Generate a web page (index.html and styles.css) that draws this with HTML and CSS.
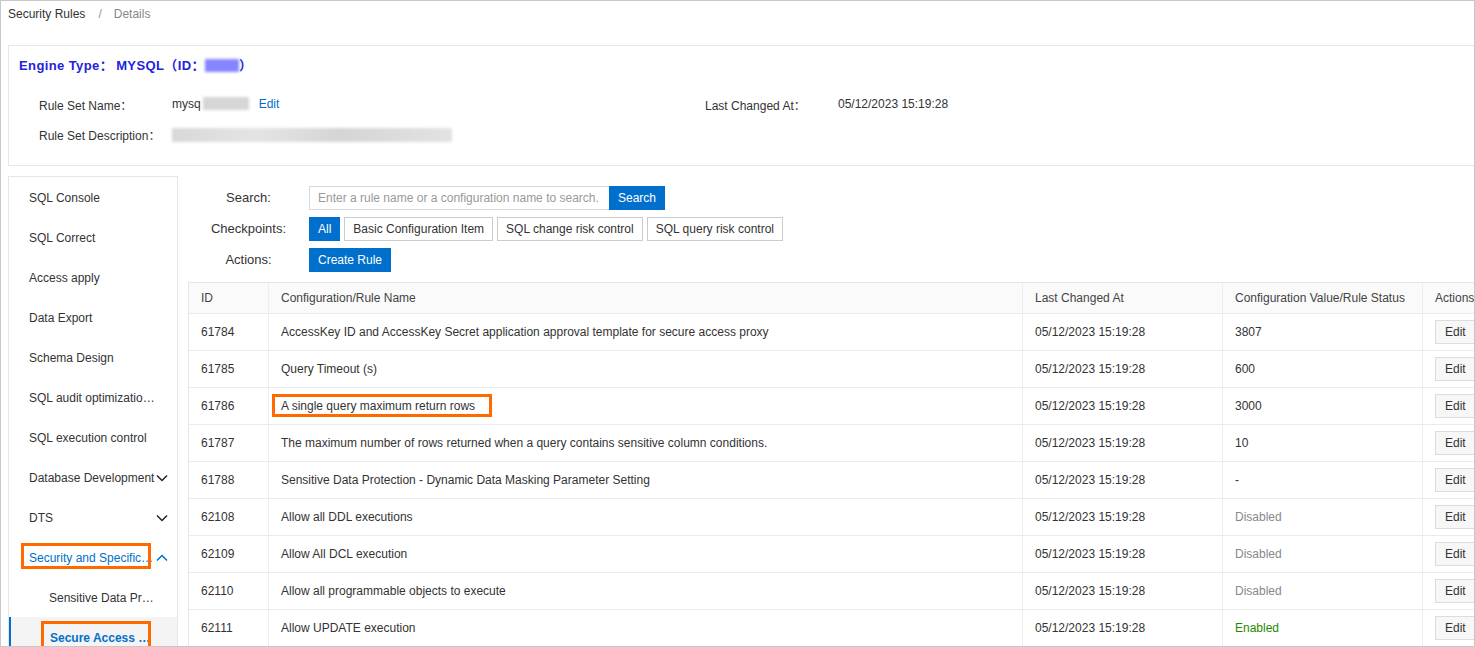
FILE: index.html
```html
<!DOCTYPE html>
<html lang="en">
<head>
<meta charset="utf-8">
<title>Security Rules - Details</title>
<link rel="stylesheet" href="styles.css">
</head>
<body>
<div class="frame">
  <div class="page">
    <div class="crumbs">
      <span class="crumb">Security Rules</span><span class="sep">/</span><span class="crumb current">Details</span>
    </div>

    <section class="card">
      <h1 class="engine">Engine Type：<span class="engine-val">MYSQL</span>（ID：<span class="blur blur-id"></span>）</h1>
      <div class="info">
        <div class="info-row">
          <span class="label">Rule Set Name：</span>
          <span class="value">mysq<span class="blur blur-name"></span><a class="link">Edit</a></span>
          <span class="label">Last Changed At：</span>
          <span class="value">05/12/2023 15:19:28</span>
        </div>
        <div class="info-row">
          <span class="label">Rule Set Description：</span>
          <span class="value"><span class="blur blur-desc"></span></span>
        </div>
      </div>
    </section>

    <div class="layout">
      <nav class="sidebar">
        <div class="nav-item"><span class="nav-text">SQL Console</span></div>
        <div class="nav-item"><span class="nav-text">SQL Correct</span></div>
        <div class="nav-item"><span class="nav-text">Access apply</span></div>
        <div class="nav-item"><span class="nav-text">Data Export</span></div>
        <div class="nav-item"><span class="nav-text">Schema Design</span></div>
        <div class="nav-item"><span class="nav-text">SQL audit optimization advice</span></div>
        <div class="nav-item"><span class="nav-text">SQL execution control</span></div>
        <div class="nav-item"><span class="nav-text">Database Development</span>
          <svg class="chev" viewBox="0 0 12 8" width="12" height="8"><path d="M1 1.5 L6 6.5 L11 1.5"/></svg></div>
        <div class="nav-item"><span class="nav-text">DTS</span>
          <svg class="chev" viewBox="0 0 12 8" width="12" height="8"><path d="M1 1.5 L6 6.5 L11 1.5"/></svg></div>
        <div class="nav-item open"><span class="nav-text">Security and Specifications</span>
          <svg class="chev up" viewBox="0 0 12 8" width="12" height="8"><path d="M1 6.5 L6 1.5 L11 6.5"/></svg>
          <span class="annot annot-open"></span></div>
        <div class="nav-item sub"><span class="nav-text">Sensitive Data Protection</span></div>
        <div class="nav-item sub active"><span class="nav-text">Secure Access Proxy</span>
          <span class="annot annot-active"></span></div>
      </nav>

      <main class="main">
        <div class="filters">
          <div class="frow">
            <span class="flabel">Search:</span>
            <div class="search">
              <input class="search-input" type="text" placeholder="Enter a rule name or a configuration name to search.">
              <button class="btn primary">Search</button>
            </div>
          </div>
          <div class="frow">
            <span class="flabel">Checkpoints:</span>
            <div class="btns">
              <button class="btn primary">All</button>
              <button class="btn">Basic Configuration Item</button>
              <button class="btn">SQL change risk control</button>
              <button class="btn">SQL query risk control</button>
            </div>
          </div>
          <div class="frow">
            <span class="flabel">Actions:</span>
            <div class="btns"><button class="btn primary">Create Rule</button></div>
          </div>
        </div>

        <div class="table">
          <div class="tr thead">
            <div class="td">ID</div>
            <div class="td">Configuration/Rule Name</div>
            <div class="td">Last Changed At</div>
            <div class="td">Configuration Value/Rule Status</div>
            <div class="td">Actions</div>
          </div>
          <div class="tr">
            <div class="td">61784</div>
            <div class="td">AccessKey ID and AccessKey Secret application approval template for secure access proxy</div>
            <div class="td">05/12/2023 15:19:28</div>
            <div class="td">3807</div>
            <div class="td"><button class="btn edit">Edit</button></div>
          </div>
          <div class="tr">
            <div class="td">61785</div>
            <div class="td">Query Timeout (s)</div>
            <div class="td">05/12/2023 15:19:28</div>
            <div class="td">600</div>
            <div class="td"><button class="btn edit">Edit</button></div>
          </div>
          <div class="tr">
            <div class="td">61786</div>
            <div class="td marked">A single query maximum return rows<span class="annot annot-row"></span></div>
            <div class="td">05/12/2023 15:19:28</div>
            <div class="td">3000</div>
            <div class="td"><button class="btn edit">Edit</button></div>
          </div>
          <div class="tr">
            <div class="td">61787</div>
            <div class="td">The maximum number of rows returned when a query contains sensitive column conditions.</div>
            <div class="td">05/12/2023 15:19:28</div>
            <div class="td">10</div>
            <div class="td"><button class="btn edit">Edit</button></div>
          </div>
          <div class="tr">
            <div class="td">61788</div>
            <div class="td">Sensitive Data Protection - Dynamic Data Masking Parameter Setting</div>
            <div class="td">05/12/2023 15:19:28</div>
            <div class="td">-</div>
            <div class="td"><button class="btn edit">Edit</button></div>
          </div>
          <div class="tr">
            <div class="td">62108</div>
            <div class="td">Allow all DDL executions</div>
            <div class="td">05/12/2023 15:19:28</div>
            <div class="td disabled">Disabled</div>
            <div class="td"><button class="btn edit">Edit</button></div>
          </div>
          <div class="tr">
            <div class="td">62109</div>
            <div class="td">Allow All DCL execution</div>
            <div class="td">05/12/2023 15:19:28</div>
            <div class="td disabled">Disabled</div>
            <div class="td"><button class="btn edit">Edit</button></div>
          </div>
          <div class="tr">
            <div class="td">62110</div>
            <div class="td">Allow all programmable objects to execute</div>
            <div class="td">05/12/2023 15:19:28</div>
            <div class="td disabled">Disabled</div>
            <div class="td"><button class="btn edit">Edit</button></div>
          </div>
          <div class="tr">
            <div class="td">62111</div>
            <div class="td">Allow UPDATE execution</div>
            <div class="td">05/12/2023 15:19:28</div>
            <div class="td enabled">Enabled</div>
            <div class="td"><button class="btn edit">Edit</button></div>
          </div>
        </div>
      </main>
    </div>
  </div>
</div>
</body>
</html>
```

FILE: styles.css
```css
* { box-sizing: border-box; }

html, body {
  margin: 0;
  padding: 0;
  background: #fff;
}

body {
  font-family: "Liberation Sans", Arial, "Noto Sans CJK SC", sans-serif;
  font-size: 12px;
  color: #333;
}

.frame {
  width: 1475px;
  height: 647px;
  border: 1px solid #c8c8c8;
  overflow: hidden;
}

.page {
  width: 1520px;
  padding-left: 7px;
}

/* breadcrumb */
.crumbs {
  padding-top: 4px;
  line-height: 18px;
  height: 22px;
}
.crumb { color: #333; }
.crumb.current { color: #888; }
.sep { color: #999; margin: 0 12px 0 13px; }

/* info card */
.card {
  margin-top: 22px;
  width: 1490px;
  border: 1px solid #e6e6e6;
  padding: 9px 10px 15px;
}
.engine {
  margin: 0;
  font-size: 13px;
  font-weight: bold;
  line-height: 22px;
  letter-spacing: 0.4px;
  color: #2323dc;
}
.engine-val { margin-left: 3px; }
.blur {
  display: inline-block;
  vertical-align: middle;
  filter: blur(1.5px);
}
.blur-id {
  width: 34px;
  height: 13px;
  background: #8585ff;
  margin-top: -3px;
}
.blur-name {
  width: 46px;
  height: 13px;
  background: #d6d6d6;
  margin-left: 2px;
  margin-top: -2px;
}
.blur-desc {
  width: 280px;
  height: 14px;
  background: linear-gradient(90deg, #d8d8d8, #e4e4e4 30%, #d5d5d5 60%, #e2e2e2);
}

.info {
  margin-top: 12px;
  margin-left: 20px;
}
.info-row {
  display: grid;
  grid-template-columns: 133px 533px 133px auto;
  align-items: center;
  height: 30px;
}
.info-row + .info-row { height: 31px; }
.label { color: #333; }
.value { color: #333; }
.link {
  color: #0070cc;
  margin-left: 10px;
  cursor: pointer;
}

/* layout */
.layout {
  display: flex;
  align-items: flex-start;
  margin-top: 10px;
}

.sidebar {
  width: 170px;
  flex: none;
  border: 1px solid #e6e6e6;
  border-bottom: none;
  height: 520px;
}

.nav-item {
  position: relative;
  display: grid;
  grid-template-columns: minmax(0, 1fr) 12px;
  align-items: center;
  height: 40px;
  padding: 1px 9px 0 20px;
  color: #333;
}
.nav-text {
  white-space: nowrap;
  overflow: hidden;
  text-overflow: ellipsis;
}
.chev {
  fill: none;
  stroke: #222;
  stroke-width: 1.5;
}
.chev.up { stroke: #0070cc; }
.nav-item.open .nav-text { color: #0070cc; }
.nav-item.sub { padding-left: 40px; }
.nav-item.active {
  background: #f4f4f4;
  box-shadow: inset 2px 0 0 #0070cc;
  padding-left: 41px;
}
.nav-item.active .nav-text {
  color: #0070cc;
  font-weight: bold;
}

.annot {
  position: absolute;
  border: 3px solid #ff6a00;
  pointer-events: none;
}
.annot-open { left: 12px; top: 6px; width: 130px; height: 26px; }
.annot-active { left: 32px; top: 4px; width: 110px; height: 32px; }
.annot-row { left: 3px; top: 6px; width: 220px; height: 23px; }

/* main */
.main {
  margin-left: 10px;
  padding-top: 10px;
  flex: none;
}

.filters {
  display: flex;
  flex-direction: column;
  gap: 7px;
}
.frow {
  display: grid;
  grid-template-columns: 121px auto;
  align-items: center;
  height: 24px;
}
.flabel {
  text-align: center;
  font-size: 13px;
  color: #333;
  padding-bottom: 2px;
}
.search { display: flex; }
.search-input {
  width: 300px;
  height: 24px;
  border: 1px solid #d9d9d9;
  border-right: none;
  padding: 0 8px;
  font-family: inherit;
  font-size: 12px;
  color: #333;
  outline: none;
}
.search-input::placeholder { color: #999; }

.btns { display: flex; gap: 4px; }

.btn {
  height: 24px;
  padding: 0 8px;
  border: 1px solid #ccc;
  background: #fff;
  color: #333;
  font-family: inherit;
  font-size: 12px;
  line-height: 22px;
  cursor: pointer;
  white-space: nowrap;
}
.btn.primary {
  background: #0070cc;
  border-color: #0070cc;
  color: #fff;
}
.btn.edit {
  background: #f7f7f7;
  border-color: #dcdcdc;
  padding: 0 9px;
}

/* table */
.table {
  margin-top: 10px;
  width: 1355px;
  border-top: 1px solid #e6e6e6;
  border-left: 1px solid #e6e6e6;
}
.tr {
  display: grid;
  grid-template-columns: 80px 754px 200px 200px 120px;
  height: 37px;
  border-bottom: 1px solid #ebebeb;
}
.tr.thead {
  height: 31px;
  background: #fafafa;
}
.tr.thead .td { color: #444; }
.td {
  display: flex;
  align-items: center;
  padding: 0 12px;
  border-right: 1px solid #ededed;
  white-space: nowrap;
  overflow: hidden;
  color: #333;
}
.td.marked {
  position: relative;
  overflow: visible;
}
.td.disabled { color: #888; }
.td.enabled { color: #1f8a00; }
```
